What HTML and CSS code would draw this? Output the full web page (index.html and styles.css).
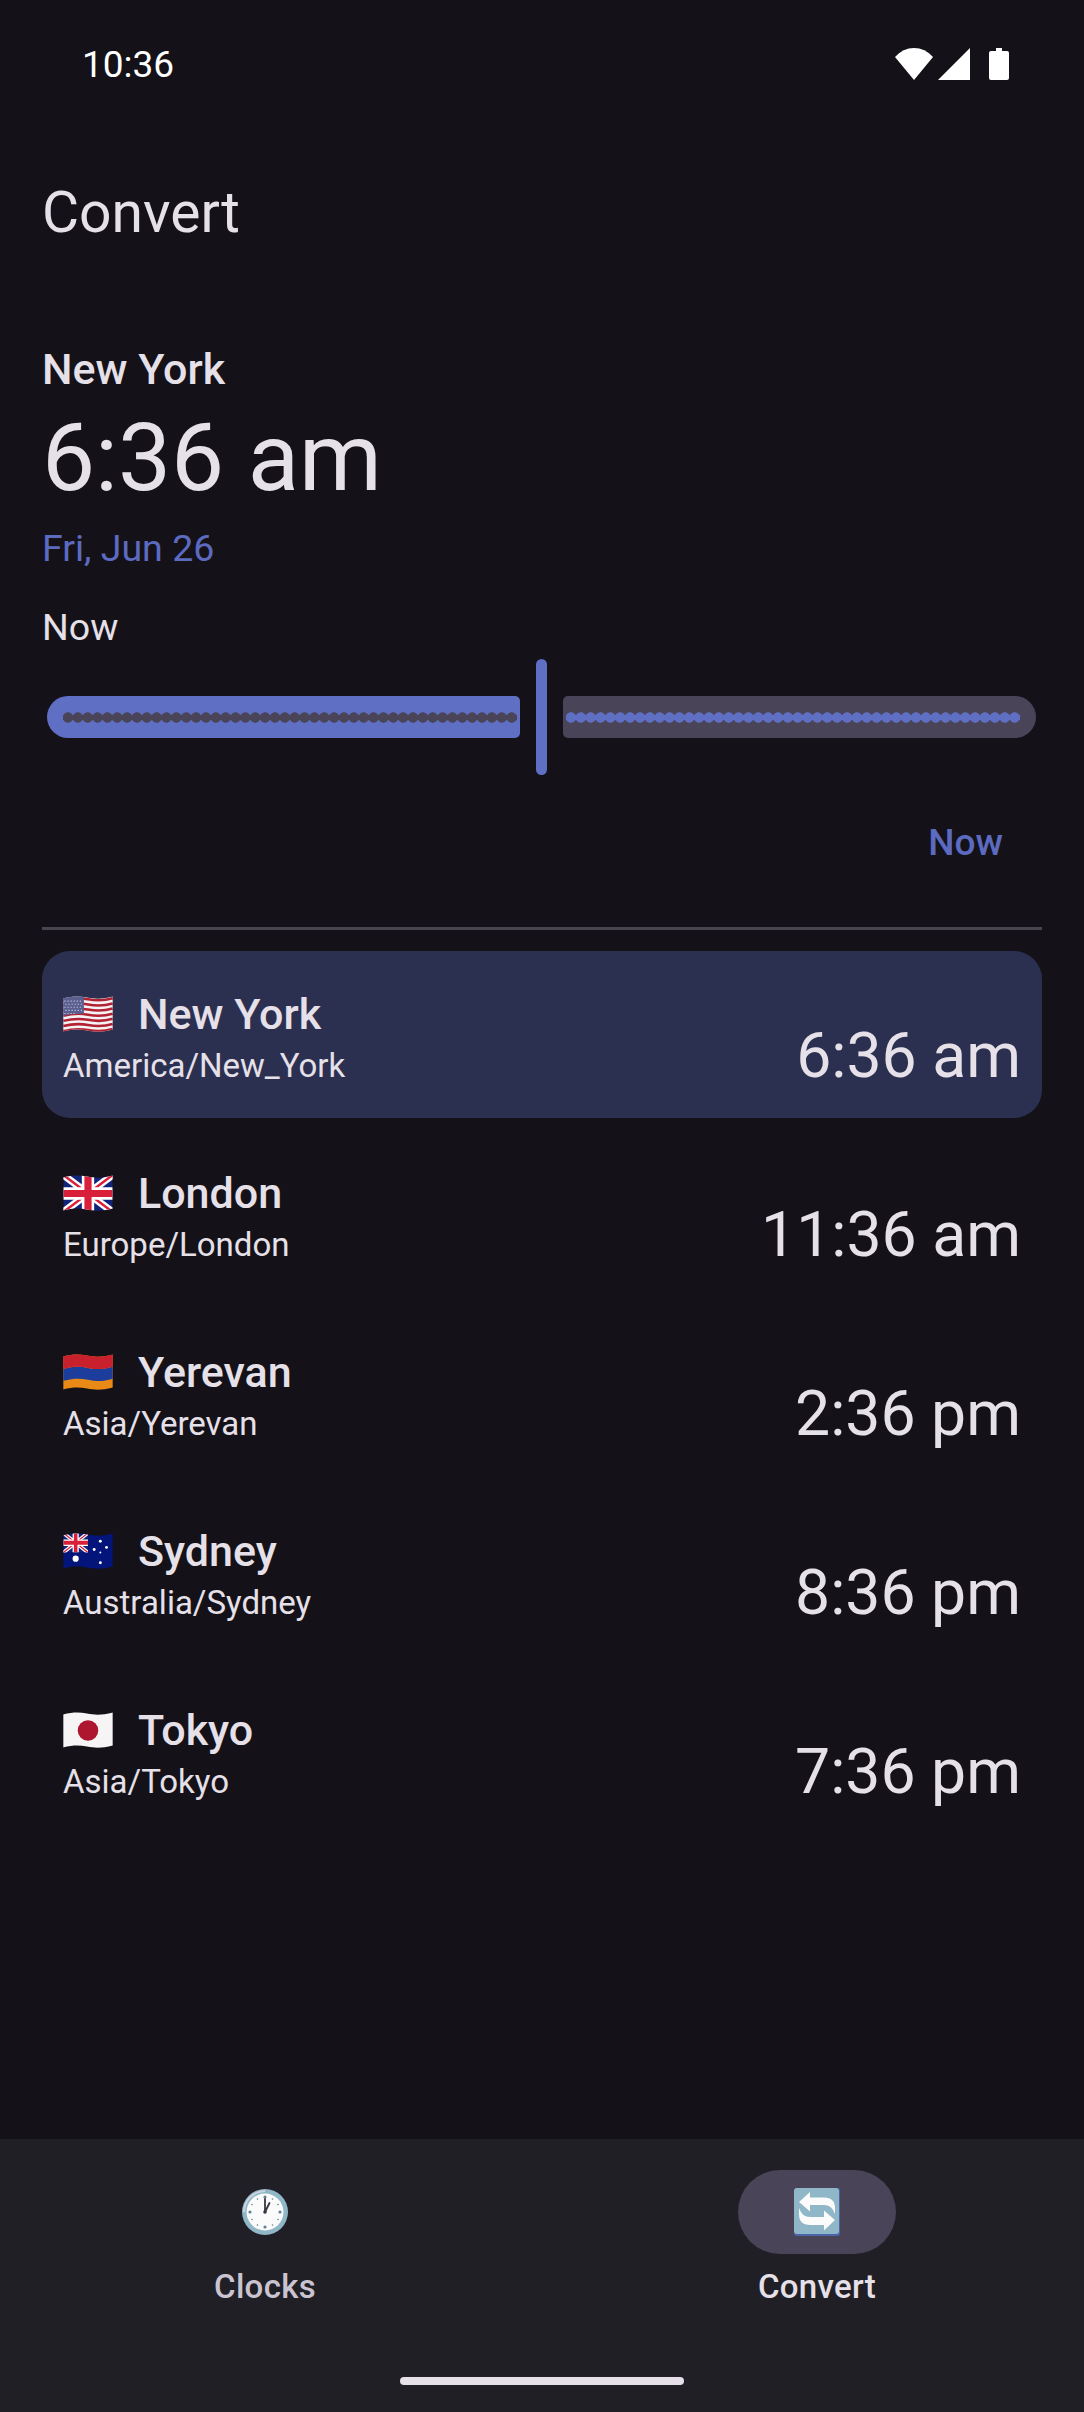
FILE: index.html
```html
<!DOCTYPE html>
<html lang="en">
<head>
    <meta charset="UTF-8">
    <meta name="viewport" content="width=device-width, initial-scale=1.0">
    <title>Convert</title>
    <link rel="stylesheet" href="styles.css">
</head>
<body>
    <div class="screen">
        <div class="status-bar">
            <span class="status-time">10:36</span>
            <div class="status-icons">
                <svg class="icon-wifi" viewBox="0 0 38 32"><path d="M19 32 0 9Q8 0 19 0T38 9Z"/></svg>
                <svg class="icon-signal" viewBox="0 0 32 32"><path d="M32 0V32H0Z"/></svg>
                <svg class="icon-battery" viewBox="0 0 20 32"><path d="M7 0H13V3H18Q20 3 20 5V30Q20 32 18 32H2Q0 32 0 30V5Q0 3 2 3H7Z"/></svg>
            </div>
        </div>

        <main class="content">
            <h1 class="page-title">Convert</h1>

            <section class="summary">
                <div class="summary-city">New York</div>
                <div class="summary-time">6:36 am</div>
                <div class="summary-date">Fri, Jun 26</div>
                <div class="summary-offset">Now</div>
            </section>

            <div class="slider">
                <div class="track track-active"><div class="track-dots"></div></div>
                <div class="thumb"></div>
                <div class="track track-inactive"><div class="track-dots"></div></div>
            </div>

            <div class="now-row"><span class="now-button">Now</span></div>

            <hr class="divider">

            <div class="city-list">
                <div class="city-row selected">
                    <div class="city-info">
                        <div class="city-name">
                            <svg class="flag" viewBox="0 0 48 36">
                                <rect width="48" height="36" fill="#f4f2f2"/>
                                <g fill="none" stroke="#b22234" stroke-width="2.5">
                                    <path d="M0 4.2C10 1.7 16 1.7 24 3.2S38 5.2 48 2.2"/>
                                    <path d="M0 9.2C10 6.7 16 6.7 24 8.2S38 10.2 48 7.2"/>
                                    <path d="M0 14.2C10 11.7 16 11.7 24 13.2S38 15.2 48 12.2"/>
                                    <path d="M0 19.2C10 16.7 16 16.7 24 18.2S38 20.2 48 17.2"/>
                                    <path d="M0 24.2C10 21.7 16 21.7 24 23.2S38 25.2 48 22.2"/>
                                    <path d="M0 29.2C10 26.7 16 26.7 24 28.2S38 30.2 48 27.2"/>
                                    <path d="M0 34.2C10 31.7 16 31.7 24 33.2S38 35.2 48 32.2"/>
                                </g>
                                <path d="M0 0H20V17.5C12 17 6 18 0 19.5Z" fill="#5a5f8f"/>
                                <g fill="none" stroke="#c9cbe0" stroke-width="1.1" stroke-dasharray="1.1 1.9">
                                    <path d="M1 5H19"/>
                                    <path d="M2 8H19"/>
                                    <path d="M1 11H19"/>
                                    <path d="M2 14H19"/>
                                    <path d="M1 17H13"/>
                                </g>
                            </svg>
                            New York
                        </div>
                        <div class="city-zone">America/New_York</div>
                    </div>
                    <div class="city-time">6:36 am</div>
                </div>

                <div class="city-row">
                    <div class="city-info">
                        <div class="city-name">
                            <svg class="flag" viewBox="0 0 48 36">
                                <symbol id="union" viewBox="0 0 48 36" preserveAspectRatio="none">
                                    <rect width="48" height="36" fill="#12237a"/>
                                    <path d="M0 0 48 36M48 0 0 36" stroke="#fff" stroke-width="7"/>
                                    <path d="M0 0 48 36M48 0 0 36" stroke="#d8203a" stroke-width="2.4"/>
                                    <path d="M24 0V36M0 18H48" stroke="#fff" stroke-width="12"/>
                                    <path d="M24 0V36M0 18H48" stroke="#d8203a" stroke-width="7"/>
                                </symbol>
                                <use href="#union" width="48" height="36"/>
                            </svg>
                            London
                        </div>
                        <div class="city-zone">Europe/London</div>
                    </div>
                    <div class="city-time">11:36 am</div>
                </div>

                <div class="city-row">
                    <div class="city-info">
                        <div class="city-name">
                            <svg class="flag" viewBox="0 0 48 36">
                                <rect width="48" height="36" fill="#e98a16"/>
                                <path d="M0 14.5C10 12 16 12 24 13.5S38 15.5 48 12.5V24C38 27 32 26.5 24 25S10 23.5 0 26Z" fill="#1d3d9c"/>
                                <path d="M0 0H48V12.5C38 15.5 32 15 24 13.5S10 12 0 14.5Z" fill="#c8202c"/>
                            </svg>
                            Yerevan
                        </div>
                        <div class="city-zone">Asia/Yerevan</div>
                    </div>
                    <div class="city-time">2:36 pm</div>
                </div>

                <div class="city-row">
                    <div class="city-info">
                        <div class="city-name">
                            <svg class="flag" viewBox="0 0 48 36">
                                <rect width="48" height="36" fill="#03147a"/>
                                <use href="#union" width="24" height="19"/>
                                <g fill="#fff">
                                    <circle cx="12" cy="25" r="3"/>
                                    <circle cx="36" cy="8" r="1.4"/>
                                    <circle cx="30" cy="16" r="1.4"/>
                                    <circle cx="42" cy="14" r="1.4"/>
                                    <circle cx="36" cy="19" r=".9"/>
                                    <circle cx="36" cy="29" r="1.4"/>
                                </g>
                            </svg>
                            Sydney
                        </div>
                        <div class="city-zone">Australia/Sydney</div>
                    </div>
                    <div class="city-time">8:36 pm</div>
                </div>

                <div class="city-row">
                    <div class="city-info">
                        <div class="city-name">
                            <svg class="flag" viewBox="0 0 48 36">
                                <rect width="48" height="36" fill="#f6f4f4"/>
                                <circle cx="24" cy="18" r="10" fill="#ae152f"/>
                            </svg>
                            Tokyo
                        </div>
                        <div class="city-zone">Asia/Tokyo</div>
                    </div>
                    <div class="city-time">7:36 pm</div>
                </div>
            </div>
        </main>

        <nav class="bottom-nav">
            <div class="nav-items">
                <div class="nav-item">
                    <div class="nav-icon">
                        <svg class="emoji" viewBox="0 0 46 46">
                            <circle cx="23" cy="23" r="23" fill="#8fb7c7"/>
                            <path d="M23 1A22 22 0 0 0 1 23H3A20 20 0 0 1 23 3Z" fill="#cfd3de"/>
                            <circle cx="23" cy="23" r="18.5" fill="#fbfbfb"/>
                            <g fill="#5f8194">
                                <circle cx="23" cy="8" r="1.6"/>
                                <circle cx="23" cy="38" r="1.6"/>
                                <circle cx="8" cy="23" r="1.6"/>
                                <circle cx="38" cy="23" r="1.6"/>
                                <circle cx="15.5" cy="10" r=".8"/>
                                <circle cx="30.5" cy="10" r=".8"/>
                                <circle cx="10" cy="15.5" r=".8"/>
                                <circle cx="36" cy="15.5" r=".8"/>
                                <circle cx="10" cy="30.5" r=".8"/>
                                <circle cx="36" cy="30.5" r=".8"/>
                                <circle cx="15.5" cy="36" r=".8"/>
                                <circle cx="30.5" cy="36" r=".8"/>
                            </g>
                            <path d="M23 23V10M23 23 27.5 14" stroke="#37363f" stroke-width="1.8" stroke-linecap="round" fill="none"/>
                            <circle cx="23" cy="23" r="1.8" fill="#37363f"/>
                        </svg>
                    </div>
                    <span class="nav-label">Clocks</span>
                </div>
                <div class="nav-item active">
                    <div class="nav-icon">
                        <svg class="emoji" viewBox="0 0 46 48">
                            <rect width="46" height="48" rx="3" fill="#4c64a8"/>
                            <rect width="45" height="46" rx="3" fill="#8fb7c7"/>
                            <path d="M5 14 16 4V9.5H30Q41 9.5 41 20V26Q38 17 30 17H16V23.5Z" fill="#fbfbfb"/>
                            <path d="M41 32 30 42.5V37H16Q5 37 5 26V20Q8 29 16 29H30V22.5Z" fill="#fbfbfb"/>
                        </svg>
                    </div>
                    <span class="nav-label">Convert</span>
                </div>
            </div>
            <div class="home-indicator"></div>
        </nav>
    </div>
</body>
</html>
```

FILE: styles.css
```css
* {
    box-sizing: border-box;
}
body {
    margin: 0;
    background-color: #141218;
    color: #e6e0e9;
    font-family: Roboto, "Noto Sans", sans-serif;
}
.screen {
    display: flex;
    flex-direction: column;
    width: 1084px;
    height: 2412px;
    overflow: hidden;
}

/* status bar */
.status-bar {
    display: flex;
    justify-content: space-between;
    align-items: center;
    height: 128px;
    padding: 0 75px 0 82px;
    color: #fff;
}
.status-time {
    font-size: 37px;
}
.status-icons {
    display: flex;
    align-items: center;
    gap: 5px;
}
.status-icons svg {
    display: block;
    height: 32px;
    fill: #fff;
}
.icon-wifi {
    width: 38px;
}
.icon-signal {
    width: 32px;
}
.icon-battery {
    width: 20px;
    margin-left: 14px;
}

/* main */
.content {
    flex: 1;
    padding: 0 42px;
}
.page-title {
    margin: 47px 0 0;
    font-size: 57px;
    font-weight: 400;
    line-height: 76px;
}
.summary {
    margin-top: 91px;
}
.summary-city {
    font-size: 43px;
    font-weight: 500;
    line-height: 54px;
}
.summary-time {
    margin-top: 6px;
    font-size: 94.5px;
    line-height: 112px;
}
.summary-date {
    margin-top: 10px;
    font-size: 37.5px;
    line-height: 48px;
    color: #5c6bc0;
}
.summary-offset {
    margin-top: 32px;
    font-size: 37.5px;
    line-height: 46px;
}

/* slider */
.slider {
    display: flex;
    align-items: center;
    gap: 16px;
    height: 116px;
    margin-top: 9px;
    padding: 0 6px 0 5px;
}
.track {
    flex: 1;
    display: flex;
    align-items: center;
    height: 42px;
}
.track-dots {
    flex: 1;
    height: 11px;
    background-size: 9.87px 11px;
    background-repeat: round no-repeat;
}
.track-active {
    padding: 0 3px 0 16px;
    border-radius: 21px 5px 5px 21px;
    background-color: #5f6fc4;
}
.track-active .track-dots {
    background-image: radial-gradient(circle, #4a4458 4.9px, transparent 5.5px);
}
.track-inactive {
    padding: 0 16px 0 3px;
    border-radius: 5px 21px 21px 5px;
    background-color: #4a4458;
}
.track-inactive .track-dots {
    background-image: radial-gradient(circle, #5f6fc4 4.9px, transparent 5.5px);
}
.thumb {
    flex: none;
    width: 11px;
    height: 116px;
    border-radius: 6px;
    background-color: #5f6fc4;
}
.now-row {
    display: flex;
    justify-content: flex-end;
    margin-top: 44px;
    padding-right: 39px;
}
.now-button {
    font-size: 37px;
    font-weight: 500;
    line-height: 48px;
    color: #5c6bc0;
}
.divider {
    height: 3px;
    margin: 60px 0 0;
    border: none;
    background-color: #49454f;
}

/* cities */
.city-list {
    display: flex;
    flex-direction: column;
    gap: 12px;
    margin-top: 21px;
}
.city-row {
    display: flex;
    justify-content: space-between;
    align-items: flex-end;
    height: 167px;
    padding: 38px 21px 24px;
    border-radius: 28px;
}
.city-row.selected {
    background-color: #2c3050;
}
.city-info {
    align-self: flex-start;
}
.city-name {
    display: flex;
    align-items: center;
    gap: 25px;
    font-size: 43px;
    font-weight: 500;
    line-height: 50px;
}
.flag {
    flex: none;
    width: 50px;
    height: 37px;
    clip-path: path("M0 3C10 .5 16 .5 24 2S38 4 50 1V34C38 37 32 36.5 24 35S10 33.5 0 36Z");
}
.city-zone {
    margin-top: 3px;
    font-size: 33px;
    line-height: 48px;
}
.city-time {
    font-size: 62.5px;
    line-height: 76px;
}

/* bottom nav */
.bottom-nav {
    position: relative;
    height: 273px;
    background-color: #211f26;
}
.nav-items {
    display: flex;
    gap: 394px;
    padding: 31px 0 0 186px;
}
.nav-item {
    display: flex;
    flex-direction: column;
    align-items: center;
    width: 158px;
    color: #cac4d0;
}
.nav-item.active {
    color: #e6e0e9;
}
.nav-icon {
    display: flex;
    justify-content: center;
    align-items: center;
    width: 158px;
    height: 84px;
    border-radius: 42px;
}
.active .nav-icon {
    background-color: #4a4458;
}
.emoji {
    width: 46px;
    height: 48px;
}
.nav-label {
    margin-top: 11px;
    font-size: 33px;
    font-weight: 500;
    letter-spacing: .3px;
    line-height: 44px;
}
.home-indicator {
    position: absolute;
    left: 400px;
    bottom: 27px;
    width: 284px;
    height: 8px;
    border-radius: 4px;
    background-color: #e6e0e9;
}
```
